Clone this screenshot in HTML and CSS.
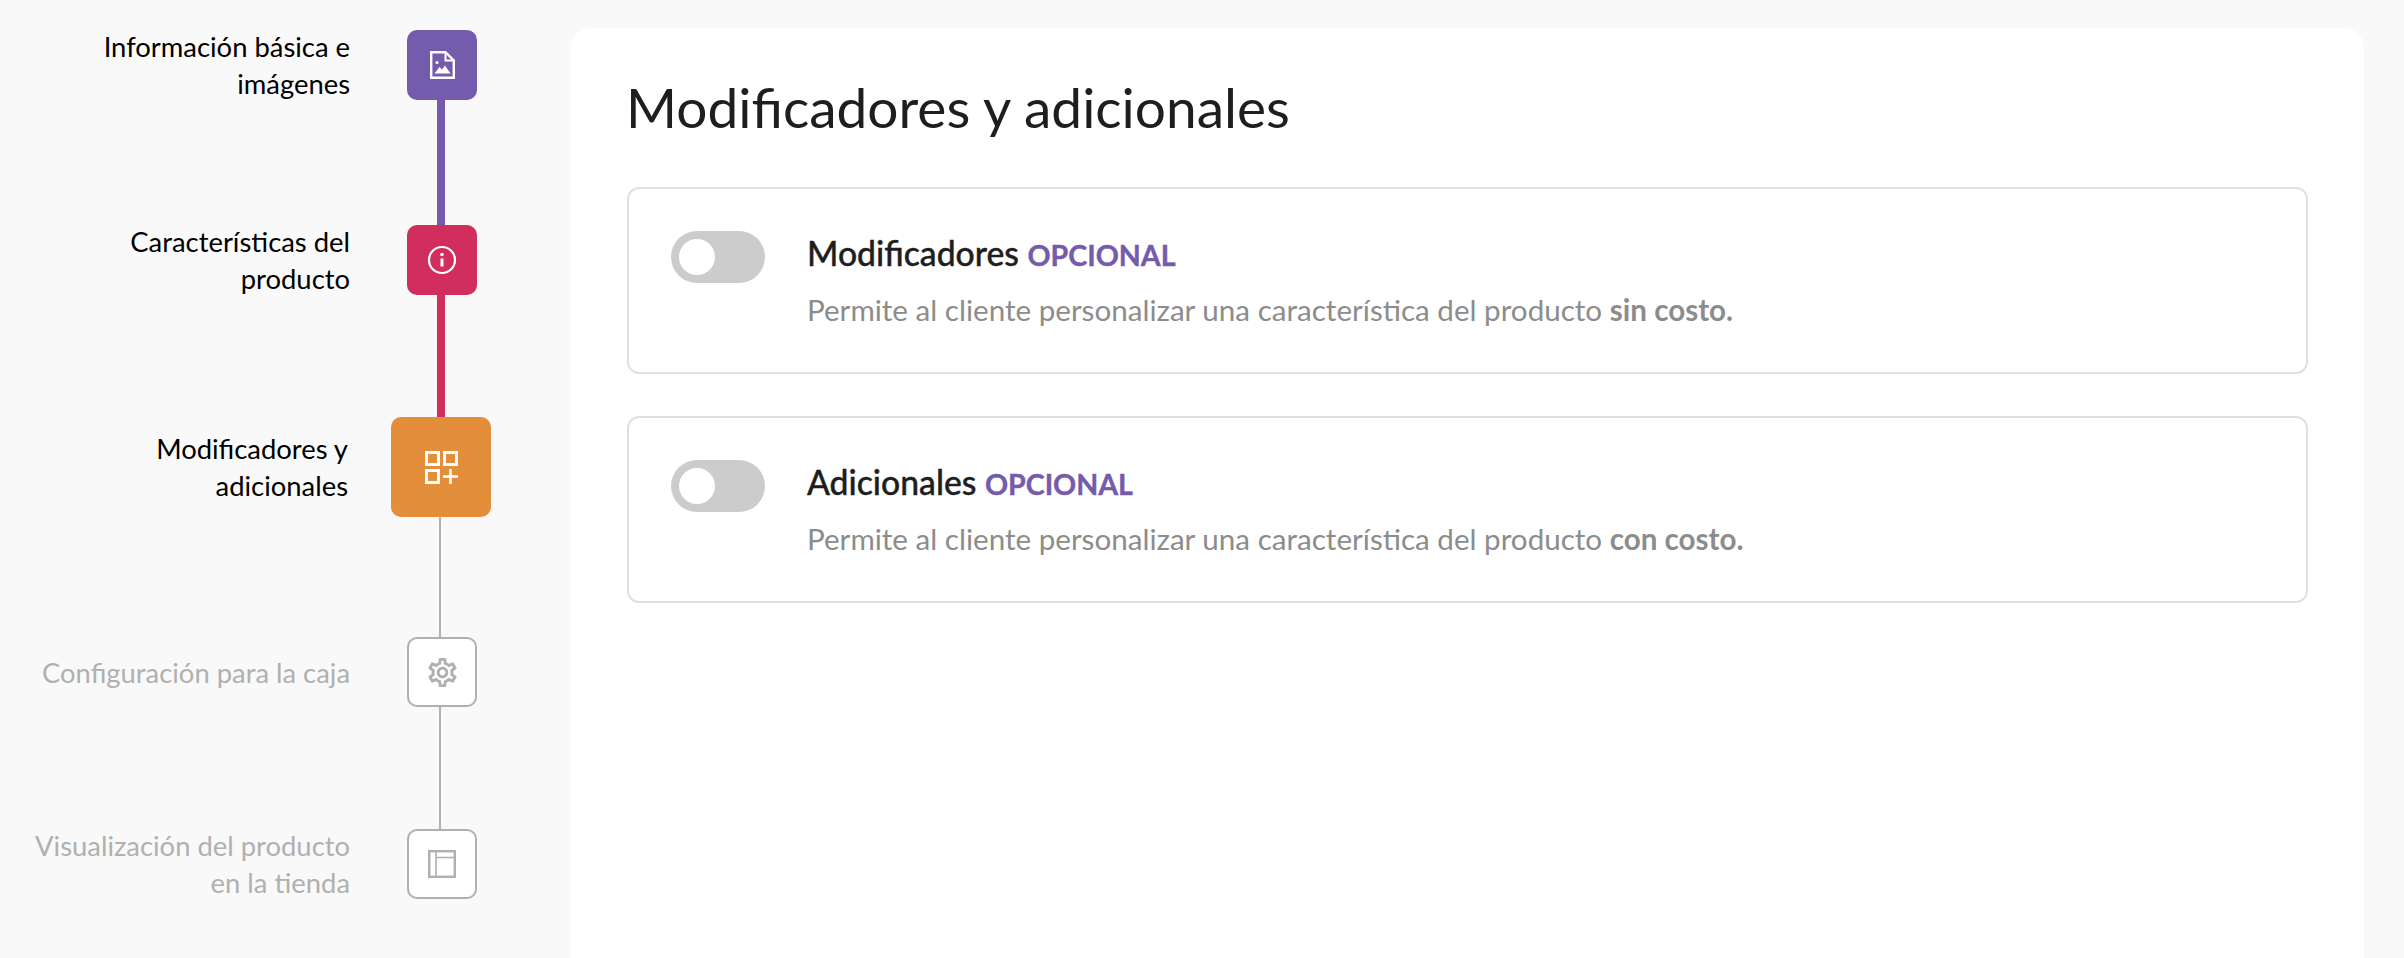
FILE: index.html
```html
<!DOCTYPE html>
<html lang="es">
<head>
    <meta charset="UTF-8">
    <title>Modificadores y adicionales</title>
    <link rel="stylesheet" href="styles.css">
</head>
<body>
    <div class="page">
        <aside class="stepper">
            <div class="step done">
                <div class="step_label">Información básica e imágenes</div>
                <div class="step_box purple">
                    <svg width="25" height="28" viewBox="0 0 25 28" fill="none" stroke="#fff" stroke-width="2.4">
                        <path d="M1.2 1.2H15.5L23.8 9.5V26.8H1.2Z"/>
                        <path d="M15.5 1.2V9.5H23.8" stroke-width="2"/>
                        <circle cx="7" cy="11.5" r="1.6" fill="#fff" stroke="none"/>
                        <path d="M4.5 22.5L9.5 16L12 18.5L15 14.5L20.5 22.5Z" fill="#fff" stroke="none"/>
                    </svg>
                </div>
            </div>
            <div class="line line_purple"></div>
            <div class="step done">
                <div class="step_label">Características del producto</div>
                <div class="step_box red">
                    <svg width="30" height="30" viewBox="0 0 30 30" fill="none" stroke="#fff" stroke-width="2.2">
                        <circle cx="15" cy="15" r="13"/>
                        <circle cx="15" cy="9.5" r="1.8" fill="#fff" stroke="none"/>
                        <path d="M15 13.5V21.5" stroke-width="3"/>
                    </svg>
                </div>
            </div>
            <div class="line line_red"></div>
            <div class="step current">
                <div class="step_label">Modificadores y adicionales</div>
                <div class="step_box orange">
                    <svg width="33" height="33" viewBox="0 0 33 33" fill="none" stroke="#fff" stroke-width="3">
                        <rect x="1.5" y="1.5" width="12" height="12"/>
                        <rect x="19.5" y="1.5" width="12" height="12"/>
                        <rect x="1.5" y="19.5" width="12" height="12"/>
                        <path d="M25.5 18V33M18 25.5H33" stroke-width="2.6"/>
                    </svg>
                </div>
            </div>
            <div class="line line_gray line_first"></div>
            <div class="step pending">
                <div class="step_label">Configuración para la caja</div>
                <div class="step_box">
                    <svg width="35" height="35" viewBox="0 0 24 24" fill="#b0b0b0">
                        <path d="M19.43 12.98c.04-.32.07-.64.07-.98 0-.34-.03-.66-.07-.98l2.11-1.65c.19-.15.24-.42.12-.64l-2-3.46c-.09-.16-.26-.25-.44-.25-.06 0-.12.01-.17.03l-2.49 1c-.52-.4-1.08-.73-1.69-.98l-.38-2.65C14.46 2.18 14.25 2 14 2h-4c-.25 0-.46.18-.49.42l-.38 2.65c-.61.25-1.17.59-1.69.98l-2.49-1c-.06-.02-.12-.03-.18-.03-.17 0-.34.09-.43.25l-2 3.46c-.13.22-.07.49.12.64l2.11 1.65c-.04.32-.07.65-.07.98 0 .33.03.66.07.98l-2.11 1.65c-.19.15-.24.42-.12.64l2 3.46c.09.16.26.25.44.25.06 0 .12-.01.17-.03l2.49-1c.52.4 1.08.73 1.69.98l.38 2.65c.03.24.24.42.49.42h4c.25 0 .46-.18.49-.42l.38-2.65c.61-.25 1.17-.59 1.69-.98l2.49 1c.06.02.12.03.18.03.17 0 .34-.09.43-.25l2-3.46c.12-.22.07-.49-.12-.64l-2.11-1.65zm-1.98-1.71c.04.31.05.52.05.73 0 .21-.02.43-.05.73l-.14 1.13.89.7 1.08.84-.7 1.21-1.27-.51-1.04-.42-.9.68c-.43.32-.84.56-1.25.73l-1.06.43-.16 1.13-.2 1.35h-1.4l-.19-1.35-.16-1.13-1.06-.43c-.43-.18-.83-.41-1.23-.71l-.91-.7-1.06.43-1.27.51-.7-1.21 1.08-.84.89-.7-.14-1.13c-.03-.31-.05-.54-.05-.74s.02-.43.05-.73l.14-1.13-.89-.7-1.08-.84.7-1.21 1.27.51 1.04.42.9-.68c.43-.32.84-.56 1.25-.73l1.06-.43.16-1.13.2-1.35h1.39l.19 1.35.16 1.13 1.06.43c.43.18.83.41 1.23.71l.91.7 1.06-.43 1.27-.51.7 1.21-1.07.85-.89.7.14 1.13zM12 8c-2.21 0-4 1.79-4 4s1.79 4 4 4 4-1.79 4-4-1.79-4-4-4zm0 6c-1.1 0-2-.9-2-2s.9-2 2-2 2 .9 2 2-.9 2-2 2z"/>
                    </svg>
                </div>
            </div>
            <div class="line line_gray"></div>
            <div class="step pending">
                <div class="step_label">Visualización del producto en la tienda</div>
                <div class="step_box">
                    <svg width="28" height="28" viewBox="0 0 28 28" fill="none" stroke="#b0b0b0" stroke-width="2.4">
                        <rect x="1.2" y="1.2" width="25.6" height="25.6"/>
                        <path d="M8 1.2V26.8M8 7.5H26.8" stroke-width="1.6"/>
                    </svg>
                </div>
            </div>
        </aside>
        <main class="panel">
            <h1>Modificadores y adicionales</h1>
            <section class="card">
                <span class="toggle"><span class="knob"></span></span>
                <div class="card_text">
                    <h2>Modificadores <span class="optional">OPCIONAL</span></h2>
                    <p>Permite al cliente personalizar una característica del producto <b>sin costo.</b></p>
                </div>
            </section>
            <section class="card">
                <span class="toggle"><span class="knob"></span></span>
                <div class="card_text">
                    <h2>Adicionales <span class="optional">OPCIONAL</span></h2>
                    <p>Permite al cliente personalizar una característica del producto <b>con costo.</b></p>
                </div>
            </section>
        </main>
    </div>
</body>
</html>
```

FILE: styles.css
```css
*{
    margin:0;
    padding:0;
    box-sizing: border-box;
}
html,body{
    height: 100%;
}
body{
    background-color: #f9f9f9;
    font-family: "Lato", "Noto Sans", sans-serif;
    overflow: hidden;
}
.page{
    display: flex;
    height: 100%;
}
.stepper{
    width: 571px;
    flex: none;
    padding-top: 30px;
}
.step{
    display: flex;
    align-items: center;
    height: 70px;
}
.current{
    height: 100px;
}
.step_label{
    width: 320px;
    margin-left: 30px;
    margin-right: 57px;
    text-align: right;
    font-size: 27.4px;
    line-height: 37px;
    color: #000;
}
.pending .step_label{
    color: #b0b0b0;
}
.current .step_label{
    margin-left: 28px;
    margin-right: 43px;
}
.step_box{
    width: 70px;
    height: 70px;
    border-radius: 10px;
    display: flex;
    align-items: center;
    justify-content: center;
    background-color: #fff;
    border: 2px solid #b0b0b0;
}
.purple{
    background-color: #745bac;
    border: none;
}
.red{
    background-color: #d12d5d;
    border: none;
}
.orange{
    width: 100px;
    height: 100px;
    background-color: #e38e3b;
    border: none;
}
.line{
    margin-left: 437px;
    width: 8px;
}
.line_purple{
    height: 125px;
    background-color: #745bac;
}
.line_red{
    height: 122px;
    background-color: #d12d5d;
}
.line_gray{
    margin-left: 439px;
    width: 2px;
    height: 122px;
    background-color: #b0b0b0;
}
.line_first{
    height: 120px;
}
.panel{
    width: 1793px;
    margin-top: 28px;
    padding: 44px 56px 0;
    background-color: #fff;
    border-radius: 20px 20px 0 0;
}
h1{
    margin-left: -1px;
    margin-bottom: 45px;
    font-size: 55px;
    font-weight: 400;
    line-height: 70px;
    color: #1e1e1e;
}
.card{
    display: flex;
    height: 187px;
    margin-bottom: 42px;
    padding: 42px 42px 0;
    border: 2px solid #e0e0e0;
    border-radius: 12px;
}
.toggle{
    display: block;
    flex: none;
    width: 94px;
    height: 52px;
    padding: 8px;
    border-radius: 26px;
    background-color: #ccc;
}
.knob{
    display: block;
    width: 36px;
    height: 36px;
    border-radius: 50%;
    background-color: #fff;
}
.card_text{
    margin-left: 42px;
}
h2{
    font-size: 33.7px;
    font-weight: 500;
    line-height: 44px;
    color: #1e1e1e;
    -webkit-text-stroke: 0.4px #1e1e1e;
}
.optional{
    font-size: 28.6px;
    font-weight: 700;
    color: #745bac;
    -webkit-text-stroke: 0.4px #745bac;
}
p{
    margin-top: 13px;
    font-size: 29.6px;
    line-height: 40px;
    color: #8c8c8c;
}
```
